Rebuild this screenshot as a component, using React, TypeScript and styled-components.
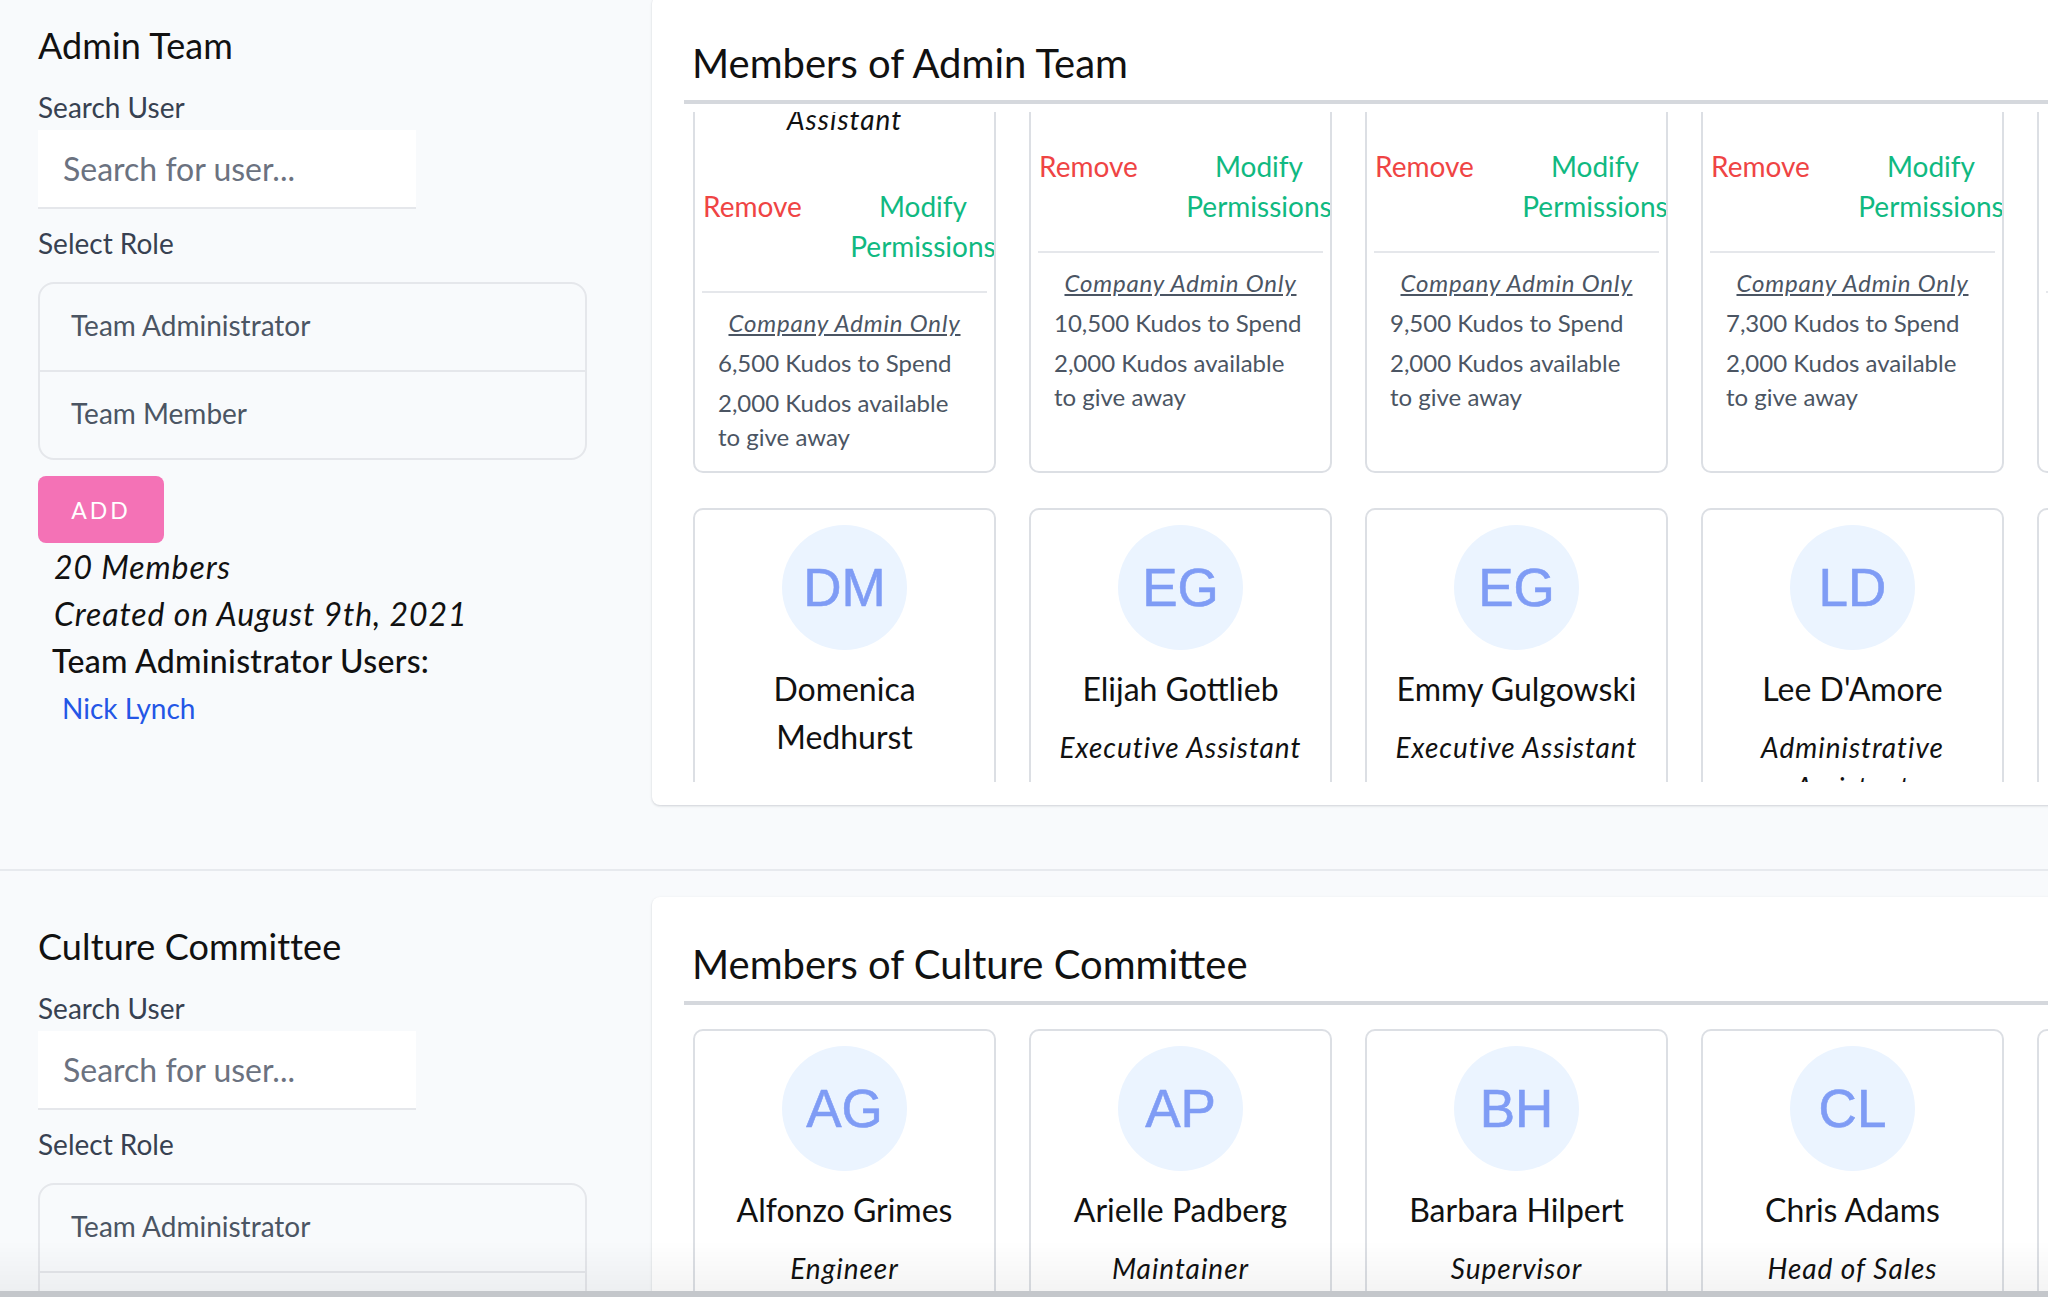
import React, { useLayoutEffect, useRef } from 'react';
import styled, { createGlobalStyle } from 'styled-components';

const GlobalStyle = createGlobalStyle`
  html, body {
    margin: 0;
    padding: 0;
    overflow: hidden;
    background: #f8fafc;
  }
  body {
    font-family: Lato, "Noto Sans", sans-serif;
    color: #111827;
  }
  *, *::before, *::after { box-sizing: border-box; }
`;

const Viewport = styled.div`
  width: 100vw;
  height: 100vh;
  overflow: hidden;
`;

const Page = styled.main`
  width: max-content;
  min-width: 100%;
`;

const Section = styled.section`
  display: flex;
  align-items: flex-start;
  padding: 26px 0 64px;
  border-bottom: 2px solid #e7eaee;
`;

const Sidebar = styled.aside`
  flex: 0 0 652px;
  padding: 22px 38px 0;
  display: flex;
  flex-direction: column;
  align-items: flex-start;
`;

const TeamName = styled.h2`
  margin: 0;
  font-size: 36px;
  line-height: 54px;
  font-weight: 400;
  letter-spacing: 0.1px;
  color: #111111;
`;

const FieldLabel = styled.label<{ $mt: number }>`
  display: block;
  margin-top: ${(p) => p.$mt}px;
  font-size: 28px;
  line-height: 40px;
  color: #374151;
`;

const SearchInput = styled.input`
  margin-top: 3px;
  width: 378px;
  height: 79px;
  border: none;
  border-bottom: 2px solid #e5e7eb;
  background: #ffffff;
  padding: 0 25px;
  font-family: Lato, "Noto Sans", sans-serif;
  font-size: 32px;
  color: #374151;
  outline: none;
  &::placeholder {
    color: #6b7280;
  }
`;

const RoleList = styled.ul`
  margin: 19px 0 0;
  padding: 0;
  list-style: none;
  width: 549px;
  border: 2px solid #e5e7eb;
  border-radius: 16px;
`;

const RoleItem = styled.li`
  padding: 21px 31px 25px;
  font-size: 28px;
  line-height: 40px;
  color: #4b5563;
  & + & {
    border-top: 2px solid #e5e7eb;
  }
`;

const AddButton = styled.button`
  margin-top: 16px;
  width: 126px;
  height: 67px;
  border: none;
  border-radius: 8px;
  background: #f472b6;
  color: #ffffff;
  font-family: Lato, "Noto Sans", sans-serif;
  font-size: 23px;
  letter-spacing: 3px;
  text-transform: uppercase;
`;

const TeamInfo = styled.div`
  padding-left: 16px;
`;

const InfoLine = styled.p`
  margin: 0;
  font-size: 32px;
  line-height: 47px;
  font-style: italic;
  letter-spacing: 0.028em;
  color: #111111;
`;

const AdminHeading = styled.p`
  margin: 0 0 0 -2px;
  font-size: 32px;
  line-height: 47px;
  font-weight: 500;
  letter-spacing: 0.3px;
  color: #111111;
`;

const AdminLink = styled.a`
  display: block;
  margin: 1px 0 0 8px;
  font-size: 28px;
  line-height: 47px;
  color: #2456e6;
  text-decoration: none;
`;

const Panel = styled.div`
  flex: 0 0 1800px;
  background: #ffffff;
  border-radius: 8px;
  box-shadow: 0 1px 3px rgba(15, 23, 42, 0.12), 0 1px 2px rgba(15, 23, 42, 0.06);
  padding: 43px 0 23px 32px;
`;

const PanelTitle = styled.h3`
  margin: 0;
  padding: 0 0 13px 8px;
  font-size: 40px;
  line-height: 48px;
  font-weight: 400;
  color: #111111;
  border-bottom: 4px solid #d5d8dd;
`;

const MemberScroller = styled.div`
  margin-top: 8px;
  height: 670px;
  overflow-y: auto;
  padding: 16px 0 0 9px;
  scrollbar-width: none;
  &::-webkit-scrollbar {
    display: none;
  }
`;

const MemberGrid = styled.div`
  display: grid;
  grid-template-columns: repeat(5, 303px);
  gap: 35px 33px;
  padding-bottom: 24px;
`;

const MemberCard = styled.div`
  border: 2px solid #dcdfe4;
  border-radius: 10px;
  padding: 15px 23px 17px;
  overflow: hidden;
  display: flex;
  flex-direction: column;
  align-items: center;
  text-align: center;
  background: #ffffff;
`;

const Avatar = styled.div`
  width: 125px;
  height: 125px;
  border-radius: 50%;
  background: #ebf4ff;
  color: #7f9cf5;
  display: flex;
  align-items: center;
  justify-content: center;
  font-family: "Liberation Sans", Arial, sans-serif;
  font-size: 53px;
  line-height: 1;
  -webkit-text-stroke: 0.6px #7f9cf5;
`;

const MemberName = styled.div`
  margin-top: 15px;
  font-size: 32px;
  line-height: 48px;
  color: #111111;
`;

const MemberRole = styled.div`
  margin-top: 14px;
  font-size: 28px;
  line-height: 40px;
  font-style: italic;
  letter-spacing: 0.035em;
  color: #111111;
`;

const Actions = styled.div`
  align-self: stretch;
  display: flex;
  justify-content: space-between;
  align-items: flex-start;
  margin: 47px -25px 0 -15px;
  font-size: 28px;
  line-height: 40px;
`;

const RemoveAction = styled.span`
  color: #ef4444;
`;

const ModifyAction = styled.span`
  width: 146px;
  text-align: center;
  color: #10b981;
`;

const Divider = styled.hr`
  align-self: stretch;
  margin: 25px -16px 0;
  height: 2px;
  border: none;
  background: #e5e7eb;
`;

const AdminOnly = styled.div`
  margin-top: 13px;
  font-size: 24px;
  line-height: 34px;
  font-style: italic;
  letter-spacing: 0.035em;
  text-decoration: underline;
  color: #4b5563;
`;

const Stats = styled.div`
  align-self: stretch;
  text-align: left;
`;

const StatLine = styled.p`
  margin: 6px 0 0;
  font-size: 24px;
  line-height: 34px;
  color: #4b5563;
`;

const BottomShade = styled.div`
  position: fixed;
  left: 0;
  right: 0;
  bottom: 0;
  height: 56px;
  pointer-events: none;
  background: linear-gradient(
    to bottom,
    rgba(0, 0, 0, 0) 0px,
    rgba(0, 0, 0, 0.045) 50px,
    #c4c7cb 50px,
    #c4c7cb 100%
  );
`;

type Member = {
  initials: string;
  name: string;
  role: string;
  spend: string;
};

type Team = {
  name: string;
  members: Member[];
  count: number;
  created: string;
  admins: string[];
  scrollTop: number;
};

const teams: Team[] = [
  {
    name: 'Admin Team',
    count: 20,
    created: 'August 9th, 2021',
    admins: ['Nick Lynch'],
    scrollTop: 288,
    members: [
      { initials: 'HK', name: 'Henri Kunze', role: 'Administrative Assistant', spend: '6,500' },
      { initials: 'AS', name: 'Ariane Schmidt', role: 'Office Manager', spend: '10,500' },
      { initials: 'BK', name: 'Brenda Koch', role: 'Office Manager', spend: '9,500' },
      { initials: 'CR', name: 'Carol Ruecker', role: 'Receptionist', spend: '7,300' },
      { initials: 'CB', name: 'Cyril Bode', role: 'Administrative Assistant', spend: '8,200' },
      { initials: 'DM', name: 'Domenica Medhurst', role: 'Administrative Assistant', spend: '5,400' },
      { initials: 'EG', name: 'Elijah Gottlieb', role: 'Executive Assistant', spend: '4,800' },
      { initials: 'EG', name: 'Emmy Gulgowski', role: 'Executive Assistant', spend: '9,100' },
      { initials: 'LD', name: "Lee D'Amore", role: 'Administrative Assistant', spend: '3,700' },
      { initials: 'MH', name: 'Mae Hills', role: 'Office Manager', spend: '6,900' },
    ],
  },
  {
    name: 'Culture Committee',
    count: 12,
    created: 'August 9th, 2021',
    admins: ['Nick Lynch'],
    scrollTop: 0,
    members: [
      { initials: 'AG', name: 'Alfonzo Grimes', role: 'Engineer', spend: '6,500' },
      { initials: 'AP', name: 'Arielle Padberg', role: 'Maintainer', spend: '10,500' },
      { initials: 'BH', name: 'Barbara Hilpert', role: 'Supervisor', spend: '9,500' },
      { initials: 'CL', name: 'Chris Adams', role: 'Head of Sales', spend: '7,300' },
      { initials: 'DH', name: 'Darren Hoeger', role: 'Designer', spend: '8,200' },
    ],
  },
];

const MemberTile: React.FC<{ member: Member }> = ({ member }) => (
  <MemberCard>
    <Avatar>{member.initials}</Avatar>
    <MemberName>{member.name}</MemberName>
    <MemberRole>{member.role}</MemberRole>
    <Actions>
      <RemoveAction>Remove</RemoveAction>
      <ModifyAction>Modify Permissions</ModifyAction>
    </Actions>
    <Divider />
    <AdminOnly>Company Admin Only</AdminOnly>
    <Stats>
      <StatLine>{member.spend} Kudos to Spend</StatLine>
      <StatLine>2,000 Kudos available to give away</StatLine>
    </Stats>
  </MemberCard>
);

const TeamSection: React.FC<{ team: Team }> = ({ team }) => {
  const scroller = useRef<HTMLDivElement>(null);
  useLayoutEffect(() => {
    if (scroller.current) scroller.current.scrollTop = team.scrollTop;
  }, [team.scrollTop]);

  return (
    <Section>
      <Sidebar>
        <TeamName>{team.name}</TeamName>
        <FieldLabel $mt={15}>Search User</FieldLabel>
        <SearchInput placeholder="Search for user..." />
        <FieldLabel $mt={14}>Select Role</FieldLabel>
        <RoleList>
          <RoleItem>Team Administrator</RoleItem>
          <RoleItem>Team Member</RoleItem>
        </RoleList>
        <AddButton>Add</AddButton>
        <TeamInfo>
          <InfoLine>{team.count} Members</InfoLine>
          <InfoLine>Created on {team.created}</InfoLine>
          <AdminHeading>Team Administrator Users:</AdminHeading>
          {team.admins.map((a) => (
            <AdminLink key={a} href="#">
              {a}
            </AdminLink>
          ))}
        </TeamInfo>
      </Sidebar>
      <Panel>
        <PanelTitle>Members of {team.name}</PanelTitle>
        <MemberScroller ref={scroller}>
          <MemberGrid>
            {team.members.map((m, i) => (
              <MemberTile key={i} member={m} />
            ))}
          </MemberGrid>
        </MemberScroller>
      </Panel>
    </Section>
  );
};

export default function App() {
  const viewport = useRef<HTMLDivElement>(null);
  useLayoutEffect(() => {
    if (viewport.current) viewport.current.scrollTop = 30;
  }, []);

  return (
    <>
      <GlobalStyle />
      <Viewport ref={viewport}>
        <Page>
          {teams.map((t) => (
            <TeamSection key={t.name} team={t} />
          ))}
        </Page>
      </Viewport>
      <BottomShade />
    </>
  );
}
